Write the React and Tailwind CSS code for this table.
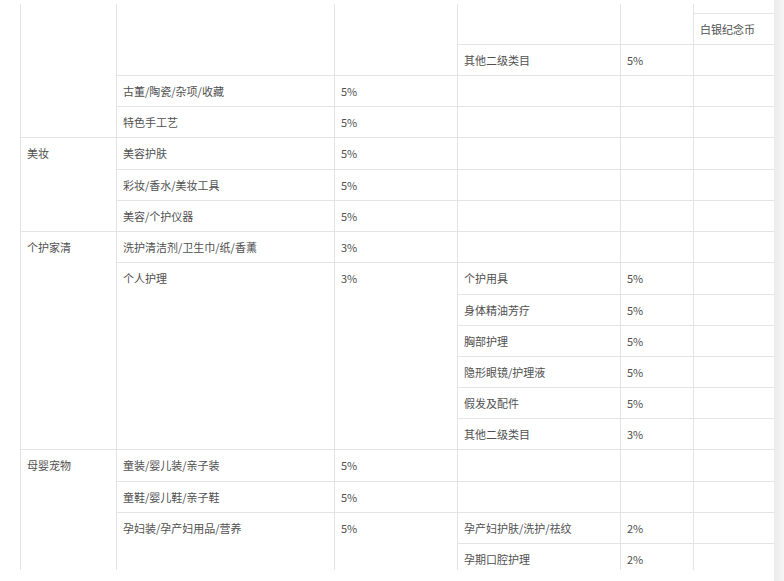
import React from "react";

const cell = "border border-[#e4e4e4] align-top px-[6px] pt-[8px] font-normal text-left";

function Row({ h, children }) {
  return <tr style={{ height: h }}>{children}</tr>;
}

function Td({ children, rowSpan, className = "" }) {
  return (
    <td rowSpan={rowSpan} className={`${cell} ${className}`}>
      {children}
    </td>
  );
}

export default function App() {
  return (
    <div className="w-[784px] h-[581px] bg-white flex overflow-hidden">
      <div className="w-[774px] shrink-0 pl-[20px] pt-[4px]">
        <div className="h-[566px] overflow-hidden">
          <table
            className="table-fixed border-collapse w-[754px] text-[11px] leading-[15px] text-[#505050]"
            style={{ fontFamily: '"Noto Sans CJK SC", "Noto Sans", sans-serif' }}
          >
            <colgroup>
              <col className="w-[96px]" />
              <col className="w-[218px]" />
              <col className="w-[123px]" />
              <col className="w-[163px]" />
              <col className="w-[73px]" />
              <col className="w-[81px]" />
            </colgroup>
            <tbody>
              <Row h={9}>
                <Td rowSpan={5} className="border-t-0" />
                <Td rowSpan={3} className="border-t-0" />
                <Td rowSpan={3} className="border-t-0" />
                <Td rowSpan={2} className="border-t-0" />
                <Td rowSpan={2} className="border-t-0" />
                <Td className="border-t-0 p-0" />
              </Row>
              <Row h={31}>
                <Td>白银纪念币</Td>
              </Row>
              <Row h={31}>
                <Td>其他二级类目</Td>
                <Td>5%</Td>
                <Td />
              </Row>
              <Row h={31}>
                <Td>古董/陶瓷/杂项/收藏</Td>
                <Td>5%</Td>
                <Td />
                <Td />
                <Td />
              </Row>
              <Row h={31}>
                <Td>特色手工艺</Td>
                <Td>5%</Td>
                <Td />
                <Td />
                <Td />
              </Row>
              <Row h={32}>
                <Td rowSpan={3}>美妆</Td>
                <Td>美容护肤</Td>
                <Td>5%</Td>
                <Td />
                <Td />
                <Td />
              </Row>
              <Row h={31}>
                <Td>彩妆/香水/美妆工具</Td>
                <Td>5%</Td>
                <Td />
                <Td />
                <Td />
              </Row>
              <Row h={31}>
                <Td>美容/个护仪器</Td>
                <Td>5%</Td>
                <Td />
                <Td />
                <Td />
              </Row>
              <Row h={31}>
                <Td rowSpan={7}>个护家清</Td>
                <Td>洗护清洁剂/卫生巾/纸/香薰</Td>
                <Td>3%</Td>
                <Td />
                <Td />
                <Td />
              </Row>
              <Row h={32}>
                <Td rowSpan={6}>个人护理</Td>
                <Td rowSpan={6}>3%</Td>
                <Td>个护用具</Td>
                <Td>5%</Td>
                <Td />
              </Row>
              <Row h={31}>
                <Td>身体精油芳疗</Td>
                <Td>5%</Td>
                <Td />
              </Row>
              <Row h={31}>
                <Td>胸部护理</Td>
                <Td>5%</Td>
                <Td />
              </Row>
              <Row h={31}>
                <Td>隐形眼镜/护理液</Td>
                <Td>5%</Td>
                <Td />
              </Row>
              <Row h={31}>
                <Td>假发及配件</Td>
                <Td>5%</Td>
                <Td />
              </Row>
              <Row h={31}>
                <Td>其他二级类目</Td>
                <Td>3%</Td>
                <Td />
              </Row>
              <Row h={32}>
                <Td rowSpan={4}>母婴宠物</Td>
                <Td>童装/婴儿装/亲子装</Td>
                <Td>5%</Td>
                <Td />
                <Td />
                <Td />
              </Row>
              <Row h={31}>
                <Td>童鞋/婴儿鞋/亲子鞋</Td>
                <Td>5%</Td>
                <Td />
                <Td />
                <Td />
              </Row>
              <Row h={31}>
                <Td rowSpan={2}>孕妇装/孕产妇用品/营养</Td>
                <Td rowSpan={2}>5%</Td>
                <Td>孕产妇护肤/洗护/祛纹</Td>
                <Td>2%</Td>
                <Td />
              </Row>
              <Row h={31}>
                <Td>孕期口腔护理</Td>
                <Td>2%</Td>
                <Td />
              </Row>
            </tbody>
          </table>
        </div>
      </div>
      <div className="w-[10px] shrink-0 h-full bg-gradient-to-r from-[#ebebeb] to-[#f5f5f5]" />
    </div>
  );
}
